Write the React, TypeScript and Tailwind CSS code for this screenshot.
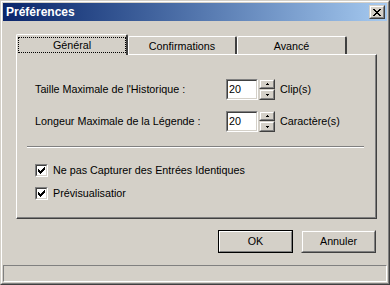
import type { ReactNode } from "react";

const font = "font-['Liberation_Sans',Arial,sans-serif]";

function CloseGlyph() {
  const rows = [
    [0, 1, 6, 7],
    [1, 2, 5, 6],
    [2, 3, 4, 5],
    [3, 4],
    [2, 3, 4, 5],
    [1, 2, 5, 6],
    [0, 1, 6, 7],
  ];
  return (
    <svg width="8" height="7" viewBox="0 0 8 7" shapeRendering="crispEdges">
      {rows.map((xs, y) =>
        xs.map((x) => <rect key={`${x}-${y}`} x={x} y={y} width="1" height="1" fill="#000" />)
      )}
    </svg>
  );
}

function CheckGlyph() {
  const rows = [
    [6],
    [5, 6],
    [0, 4, 5, 6],
    [0, 1, 3, 4, 5],
    [0, 1, 2, 3, 4],
    [1, 2, 3],
    [2],
  ];
  return (
    <svg width="7" height="7" viewBox="0 0 7 7" shapeRendering="crispEdges">
      {rows.map((xs, y) =>
        xs.map((x) => <rect key={`${x}-${y}`} x={x} y={y} width="1" height="1" fill="#000" />)
      )}
    </svg>
  );
}

function Arrow({ up }: { up?: boolean }) {
  return (
    <svg width="3" height="2" viewBox="0 0 3 2" shapeRendering="crispEdges">
      {up ? (
        <>
          <rect x="1" y="0" width="1" height="1" fill="#000" />
          <rect x="0" y="1" width="3" height="1" fill="#000" />
        </>
      ) : (
        <>
          <rect x="0" y="0" width="3" height="1" fill="#000" />
          <rect x="1" y="1" width="1" height="1" fill="#000" />
        </>
      )}
    </svg>
  );
}

// classic raised bevel: light outer/top-left, dark outer/bottom-right
function Raised({ className, children }: { className?: string; children?: ReactNode }) {
  return (
    <div className={`border border-t-[#d4d0c8] border-l-[#d4d0c8] border-r-[#404040] border-b-[#404040] bg-[#d4d0c8] ${className ?? ""}`}>
      <div className="flex h-full w-full items-center justify-center border border-t-white border-l-white border-r-[#808080] border-b-[#808080]">
        {children}
      </div>
    </div>
  );
}

function Sunken({ className, children }: { className?: string; children?: ReactNode }) {
  return (
    <div className={`border border-t-[#808080] border-l-[#808080] border-r-white border-b-white ${className ?? ""}`}>
      <div className="h-full w-full border border-t-[#404040] border-l-[#404040] border-r-[#d4d0c8] border-b-[#d4d0c8] bg-white">
        {children}
      </div>
    </div>
  );
}

function SpinRow({ label, unit, className }: { label: string; unit: string; className?: string }) {
  return (
    <div className={`flex h-[21px] items-center ${className ?? ""}`}>
      <span className="w-[191px]">{label}</span>
      <Sunken className="h-[21px] w-[32px]">
        <div className="flex h-full items-center pl-px leading-none">20</div>
      </Sunken>
      <div className="ml-px flex h-[21px] w-[16px] flex-col">
        <Raised className="h-[10px]">
          <Arrow up />
        </Raised>
        <Raised className="h-[11px]">
          <Arrow />
        </Raised>
      </div>
      <span className="ml-[5px]">{unit}</span>
    </div>
  );
}

function CheckRow({ label, className }: { label: string; className?: string }) {
  return (
    <div className={`flex h-[13px] items-center ${className ?? ""}`}>
      <Sunken className="h-[13px] w-[13px]">
        <div className="flex h-full w-full items-center justify-center">
          <CheckGlyph />
        </div>
      </Sunken>
      <span className="ml-[5px] leading-none">{label}</span>
    </div>
  );
}

export default function App() {
  return (
    <div className={`h-[285px] w-[390px] border border-t-[#d4d0c8] border-l-[#d4d0c8] border-r-[#404040] border-b-[#404040] bg-[#d4d0c8] text-[10.75px] text-black ${font}`}>
      <div className="flex h-full flex-col border border-t-white border-l-white border-r-[#808080] border-b-[#808080] p-px">
        {/* Title bar */}
        <div className="flex h-[18px] shrink-0 items-center justify-between bg-linear-to-r from-[#0a246a] to-[#a6caf0] pl-[3px] pr-[2px]">
          <span className="text-[12px] font-bold leading-none text-white">Préférences</span>
          <Raised className="h-[14px] w-[16px]">
            <CloseGlyph />
          </Raised>
        </div>

        <div className="flex flex-1 flex-col pt-[13px]">
          {/* Tabs */}
          <div className="ml-[13px] flex h-[20px] items-start">
            <div className="relative z-10 h-[21px] w-[112px] rounded-t-[2px] border-l border-t border-r-2 border-l-white border-t-white border-r-[#404040] bg-[#d4d0c8] pt-[2px] pl-px">
              <div className="flex h-[16px] w-[108px] items-center justify-center border border-dotted border-black">
                Général
              </div>
            </div>
            <div className="mt-[2px] flex h-[18px] w-[109px] items-center justify-center rounded-t-[2px] border-l border-t border-r-2 border-l-white border-t-white border-r-[#404040] pt-px">
              Confirmations
            </div>
            <div className="mt-[2px] flex h-[18px] w-[110px] items-center justify-center rounded-t-[2px] border-l border-t border-r-2 border-l-white border-t-white border-r-[#404040] pt-px">
              Avancé
            </div>
          </div>

          {/* Tab panel */}
          <div className="ml-[13px] h-[165px] w-[361px] border border-t-white border-l-white border-r-[#404040] border-b-[#404040]">
            <div className="h-full border-r border-b border-r-[#808080] border-b-[#808080] pt-[24px]">
              <div className="pl-[18px]">
                <SpinRow label="Taille Maximale de l'Historique :" unit="Clip(s)" />
                <SpinRow label="Longeur Maximale de la Légende :" unit="Caractère(s)" className="mt-[11px]" />
              </div>
              <div className="ml-[10px] mt-[14px] w-[337px] border-t border-b border-t-[#808080] border-b-white" />
              <div className="pl-[18px]">
                <CheckRow label="Ne pas Capturer des Entrées Identiques" className="mt-[16px]" />
                <CheckRow label="Prévisualisatior" className="mt-[10px]" />
              </div>
            </div>
          </div>

          {/* Buttons */}
          <div className="mt-[11px] flex justify-end gap-[8px] pr-[11px]">
            <div className="h-[23px] w-[75px] border border-black">
              <div className="flex h-full w-full items-center justify-center border border-t-white border-l-white border-r-[#808080] border-b-[#808080]">
                OK
              </div>
            </div>
            <Raised className="h-[23px] w-[75px]">
              <span>Annuler</span>
            </Raised>
          </div>

          {/* Status bar */}
          <div className="mt-auto h-[17px] border border-t-[#808080] border-l-[#808080] border-r-white border-b-white" />
        </div>
      </div>
    </div>
  );
}
